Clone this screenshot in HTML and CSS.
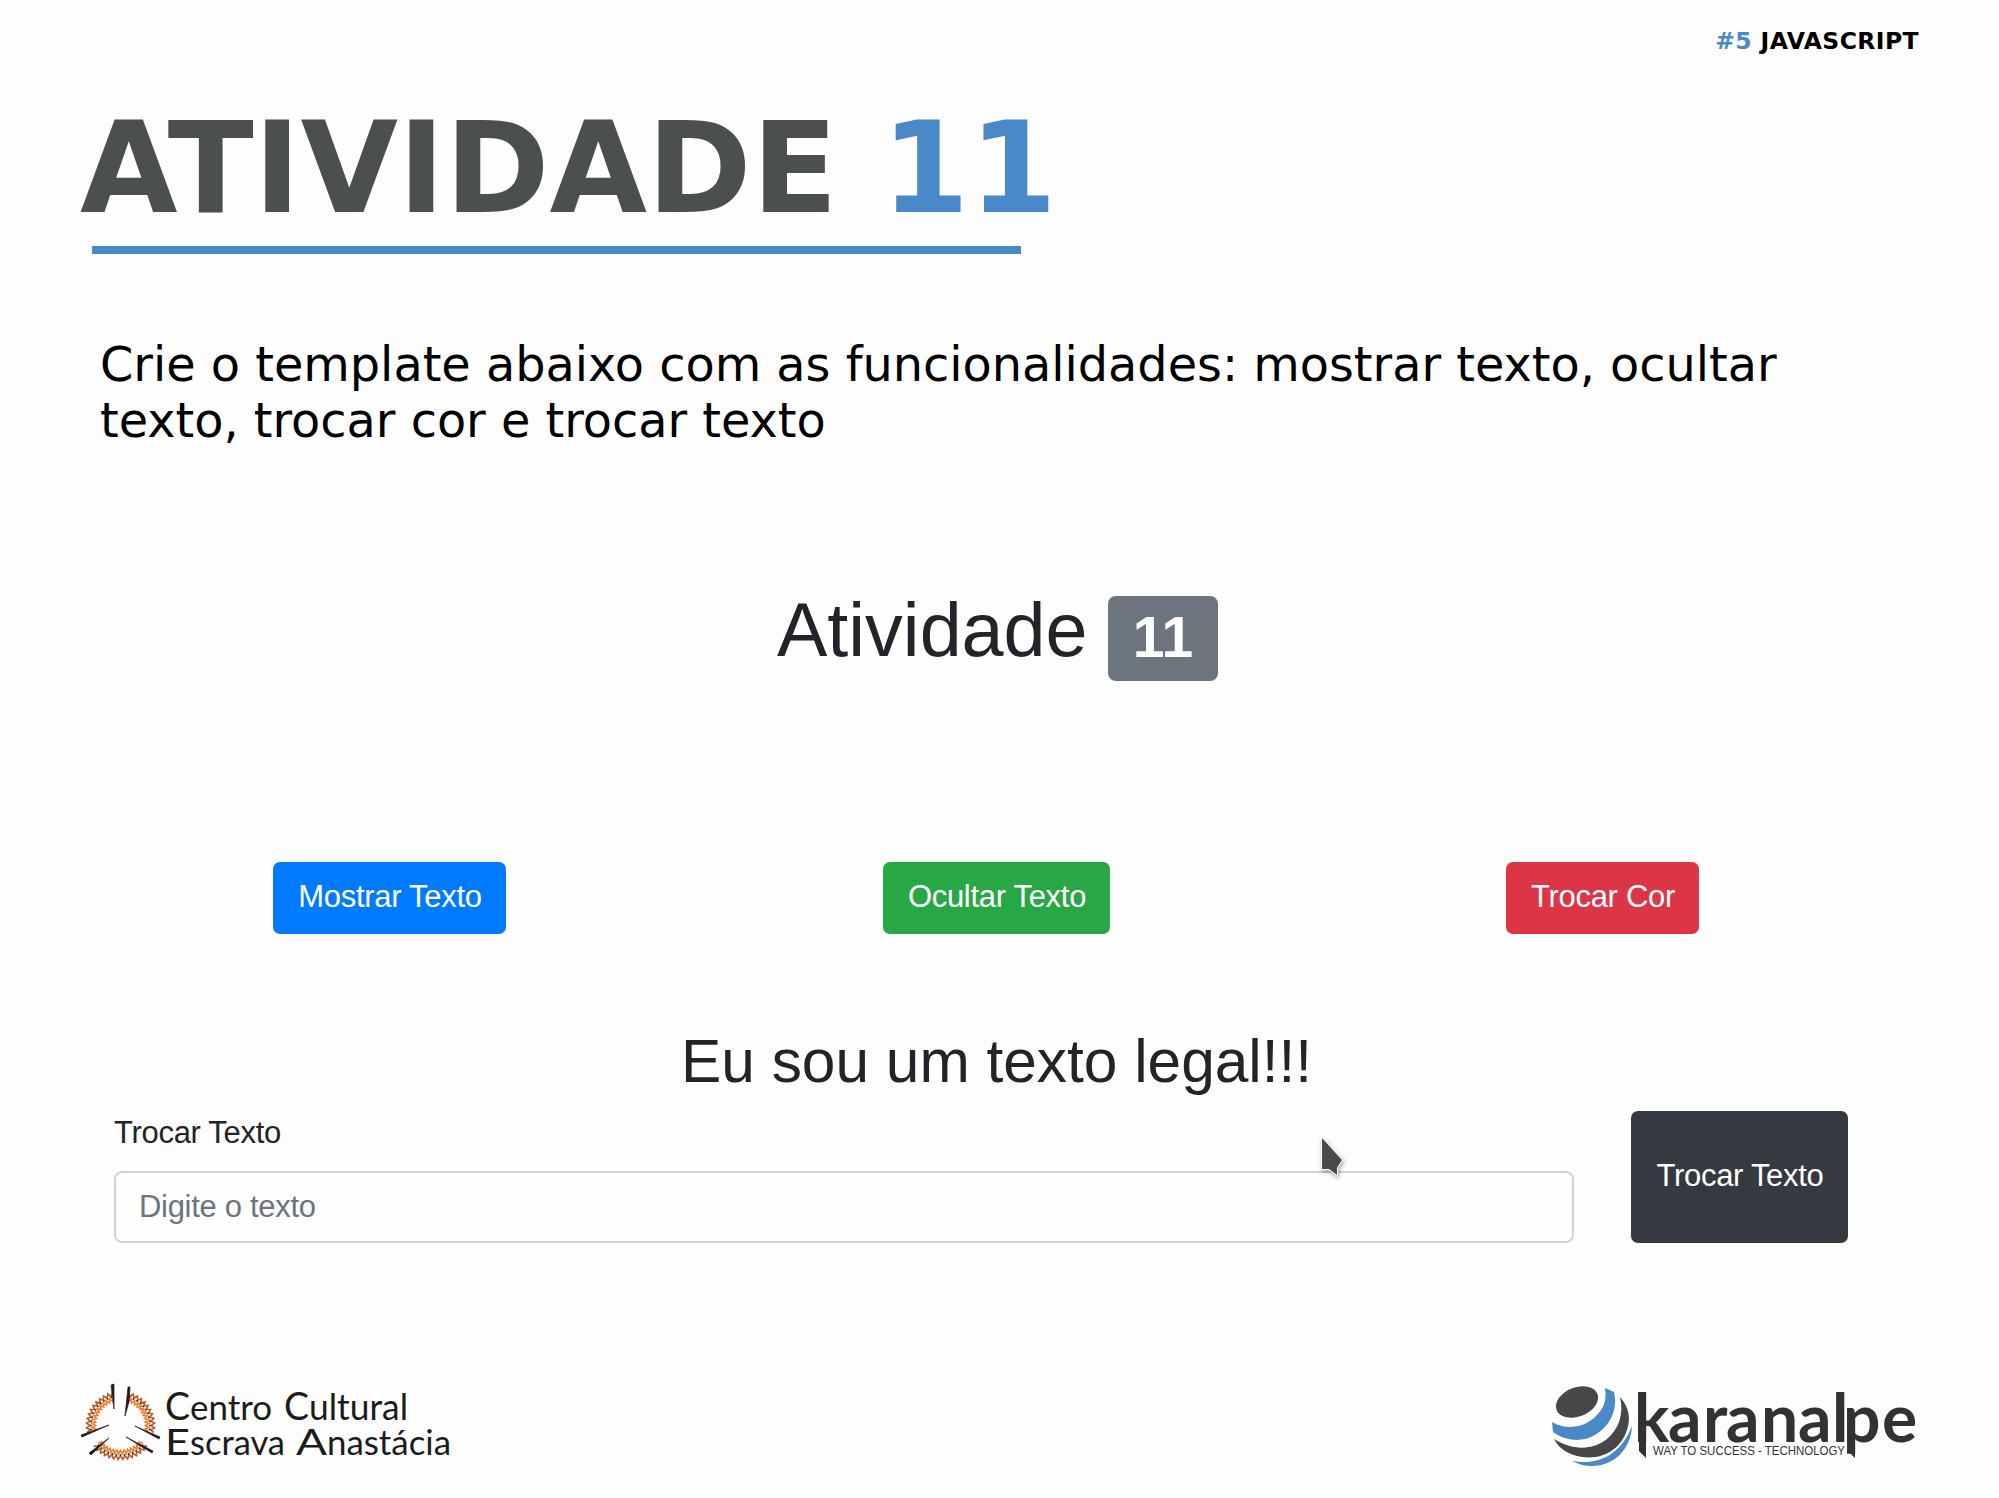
FILE: index.html
```html
<!DOCTYPE html>
<html lang="pt-BR">
<head>
<meta charset="utf-8">
<title>Atividade 11</title>
<link rel="stylesheet" href="styles.css">
</head>
<body>
<main class="slide">
  <header class="topic"><span class="accent">#5</span> JAVASCRIPT</header>
  <h1 class="title">ATIVIDADE <span class="accent">11</span></h1>
  <div class="rule"></div>
  <p class="lead">Crie o template abaixo com as funcionalidades: mostrar texto, ocultar<br>texto, trocar cor e trocar texto</p>
  <section class="demo">
    <h2 class="demo-title"><span class="demo-name">Atividade</span><span class="badge">11</span></h2>
    <div class="actions">
      <button class="btn show">Mostrar Texto</button>
      <button class="btn hide">Ocultar Texto</button>
      <button class="btn color">Trocar Cor</button>
    </div>
    <p class="message"><span>Eu sou um texto legal!!!</span></p>
    <div class="form">
      <div class="field">
        <label class="label" for="novo">Trocar Texto</label>
        <input class="input" id="novo" placeholder="Digite o texto">
        <svg class="cursor" width="32" height="46" viewBox="0 0 32 46"><path d="M5 5V36H12L20 42V35L25 27Z" fill="#4a4a4a" stroke="#fff" stroke-width="2" paint-order="stroke"/></svg>
      </div>
      <button class="btn swap">Trocar Texto</button>
    </div>
  </section>
  <footer class="footer">
    <svg class="logo" width="390" height="110" viewBox="0 0 390 110">
      <g id="ring" fill="none"></g>
      <path fill="#1c1c1c" d="M41 15L44 14L44 39ZM58 17L60 17L59 32L55 46ZM11 65L39 55L12 67ZM19 83L39 68L21 85ZM65 56L90 67L89 69ZM56 67L83 81L82 83Z" stroke="#1c1c1c" stroke-width=".7"/>
      <g class="culture">
        <text x="95" y="50" font-size="39" textLength="25" lengthAdjust="spacingAndGlyphs">C</text>
        <text x="120" y="50" font-size="35" textLength="82" lengthAdjust="spacingAndGlyphs">entro</text>
        <text x="214" y="50" font-size="39" textLength="25" lengthAdjust="spacingAndGlyphs">C</text>
        <text x="239" y="50" font-size="36" textLength="99" lengthAdjust="spacingAndGlyphs">ultural</text>
        <text x="95" y="85" font-size="37" textLength="25" lengthAdjust="spacingAndGlyphs">E</text>
        <text x="120" y="85" font-size="35" textLength="95" lengthAdjust="spacingAndGlyphs">scrava</text>
        <text x="226" y="85" font-size="37" textLength="31" lengthAdjust="spacingAndGlyphs">A</text>
        <text x="257" y="85" font-size="35" textLength="124" lengthAdjust="spacingAndGlyphs">nastácia</text>
      </g>
    </svg>
    <svg class="logo" width="390" height="110" viewBox="0 0 390 110">
      <ellipse cx="37" cy="32" rx="22" ry="14.5" transform="rotate(-22 37 32)" fill="#47474a"/>
      <path fill="#4a89c7" d="M65 18L74 22C78 40 70 56 55 65C43 72 27 72 13 62L12 52C26 60 42 58 54 48C64 39 67 30 65 18ZM92 56C91 79 74 96 52 96C44 96 38 94 32 91C59 96 81 84 92 56Z"/>
      <path fill="#47474a" d="M80 27C89 37 91 48 87 60C81 79 63 90 42 87C29 85 19 79 14 69C33 81 53 80 67 69C79 59 84 44 80 27Z"/>
      <path fill="#333133" d="M99 30L106 23V88L99 81ZM297 30L304 23V40H297ZM308 68H315V88L308 81Z"/>
      <text class="brand" x="94 128 163 186 221 258 292 303 342" y="72">karanalpe</text>
      <text class="tagline" x="113" y="85" textLength="192" lengthAdjust="spacingAndGlyphs">WAY TO SUCCESS - TECHNOLOGY</text>
    </svg>
  </footer>
</main>
<script src="ring.js"></script>
</body>
</html>
```
FILE: ring.js
```js
// Lace ring of the cultural centre logo: three arcs of zigzag thread with beads between them.
const ring = document.getElementById("ring");
const point = (radius, degrees) => {
  const a = degrees * Math.PI / 180;
  return [(50.5 + radius * Math.cos(a)).toFixed(1), (55.5 + radius * Math.sin(a)).toFixed(1)];
};
function add(d, stroke, width) {
  const path = document.createElementNS("http://www.w3.org/2000/svg", "path");
  path.setAttribute("d", d);
  path.setAttribute("stroke", stroke);
  path.setAttribute("stroke-width", width);
  ring.appendChild(path);
}
function zigzag(from, to, inner, outer) {
  const steps = [];
  for (let a = from, i = 0; a <= to; a += 4, i++) steps.push(point(i % 2 ? inner : outer, a).join(" "));
  return "M" + steps.join("L");
}
for (const [from, to] of [[168, 258], [284, 372], [38, 142]]) {
  add(zigzag(from, to, 30.5, 34), "#b4622f", 1.7);
  add(zigzag(from, to, 25, 28.5), "#ef7f2c", 1.7);
  for (let a = from + 4; a < to; a += 8) {
    const [x, y] = point(29.5, a);
    add(`M${x - 0.8} ${y}h1.6`, "#222", 1.6);
  }
}
```
FILE: styles.css
```css
* { box-sizing: border-box; }
body { margin: 0; background: #fdfdfd; }
.slide { width: 1999px; height: 1498px; overflow: hidden; font-family: "DejaVu Sans", sans-serif; color: #000; display: flex; flex-direction: column; }
.accent { color: #4a89c7; }
.topic { height: 84px; padding: 27px 80px 0 0; text-align: right; font-size: 23.5px; letter-spacing: .4px; line-height: 28px; font-weight: 700; white-space: nowrap; }
.title { margin: 11px 0 0 80px; height: 151px; font-size: 126px; line-height: 147px; font-weight: 700; color: #4b4f4f; white-space: nowrap; }
.rule { width: 929px; height: 8px; margin-left: 92px; background: #4a89c7; }
.lead { margin: 83px 0 0 100px; font-size: 47.75px; line-height: 56px; white-space: nowrap; }
.demo { margin: 120px 136px 0 114px; height: 690px; font-family: "Liberation Sans", sans-serif; color: #212529; display: flex; flex-direction: column; }
.demo-title { margin: 27px 0 0 663px; display: flex; align-items: flex-start; font-weight: 400; font-size: 75.5px; line-height: 85px; height: 266px; }
.demo-name { width: 331px; margin-top: -8px; white-space: nowrap; }
.badge { width: 110px; height: 85px; border-radius: 8px; background: #6c757d; color: #fff; font-size: 57px; line-height: 83px; font-weight: 700; text-align: center; }
.btn { border: 0; border-radius: 7px; padding: 0 0 2px 1px; color: #fff; font-family: inherit; font-size: 31px; letter-spacing: -.3px; height: 72px; white-space: nowrap; }
.actions { display: flex; margin-left: 159px; height: 164px; }
.show { width: 233px; background: #007bff; margin-right: 377px; }
.hide { width: 227px; background: #28a745; margin-right: 396px; }
.color { width: 193px; background: #dc3545; }
.message { margin: 0 0 0 567px; height: 85px; font-size: 60.4px; line-height: 70px; white-space: nowrap; }
.form { display: flex; gap: 57px; }
.field { position: relative; width: 1460px; display: flex; flex-direction: column; }
.label { height: 60px; font-size: 31px; letter-spacing: -.3px; line-height: 43px; }
.input { width: 1460px; height: 72px; border: 2px solid #ced4da; border-radius: 8px; padding: 0 23px 1px; background: #fefefe; font: 31px "Liberation Sans", sans-serif; letter-spacing: -.3px; }
.input::placeholder { color: #6c757d; opacity: 1; }
.cursor { position: absolute; left: 1203px; top: 22px; filter: drop-shadow(1px 2px 2px rgba(0,0,0,.35)); }
.swap { width: 217px; height: 132px; background: #343a40; }
.footer { display: flex; justify-content: space-between; margin: auto 69px 18px 70px; }
.logo { display: block; }
.culture { font-family: Lato, sans-serif; fill: #1c1c1c; }
.brand { font-family: Lato, sans-serif; font-size: 66px; font-weight: 700; fill: #333133; }
.tagline { font-family: "Liberation Sans", sans-serif; font-size: 12px; fill: #333; }
```
